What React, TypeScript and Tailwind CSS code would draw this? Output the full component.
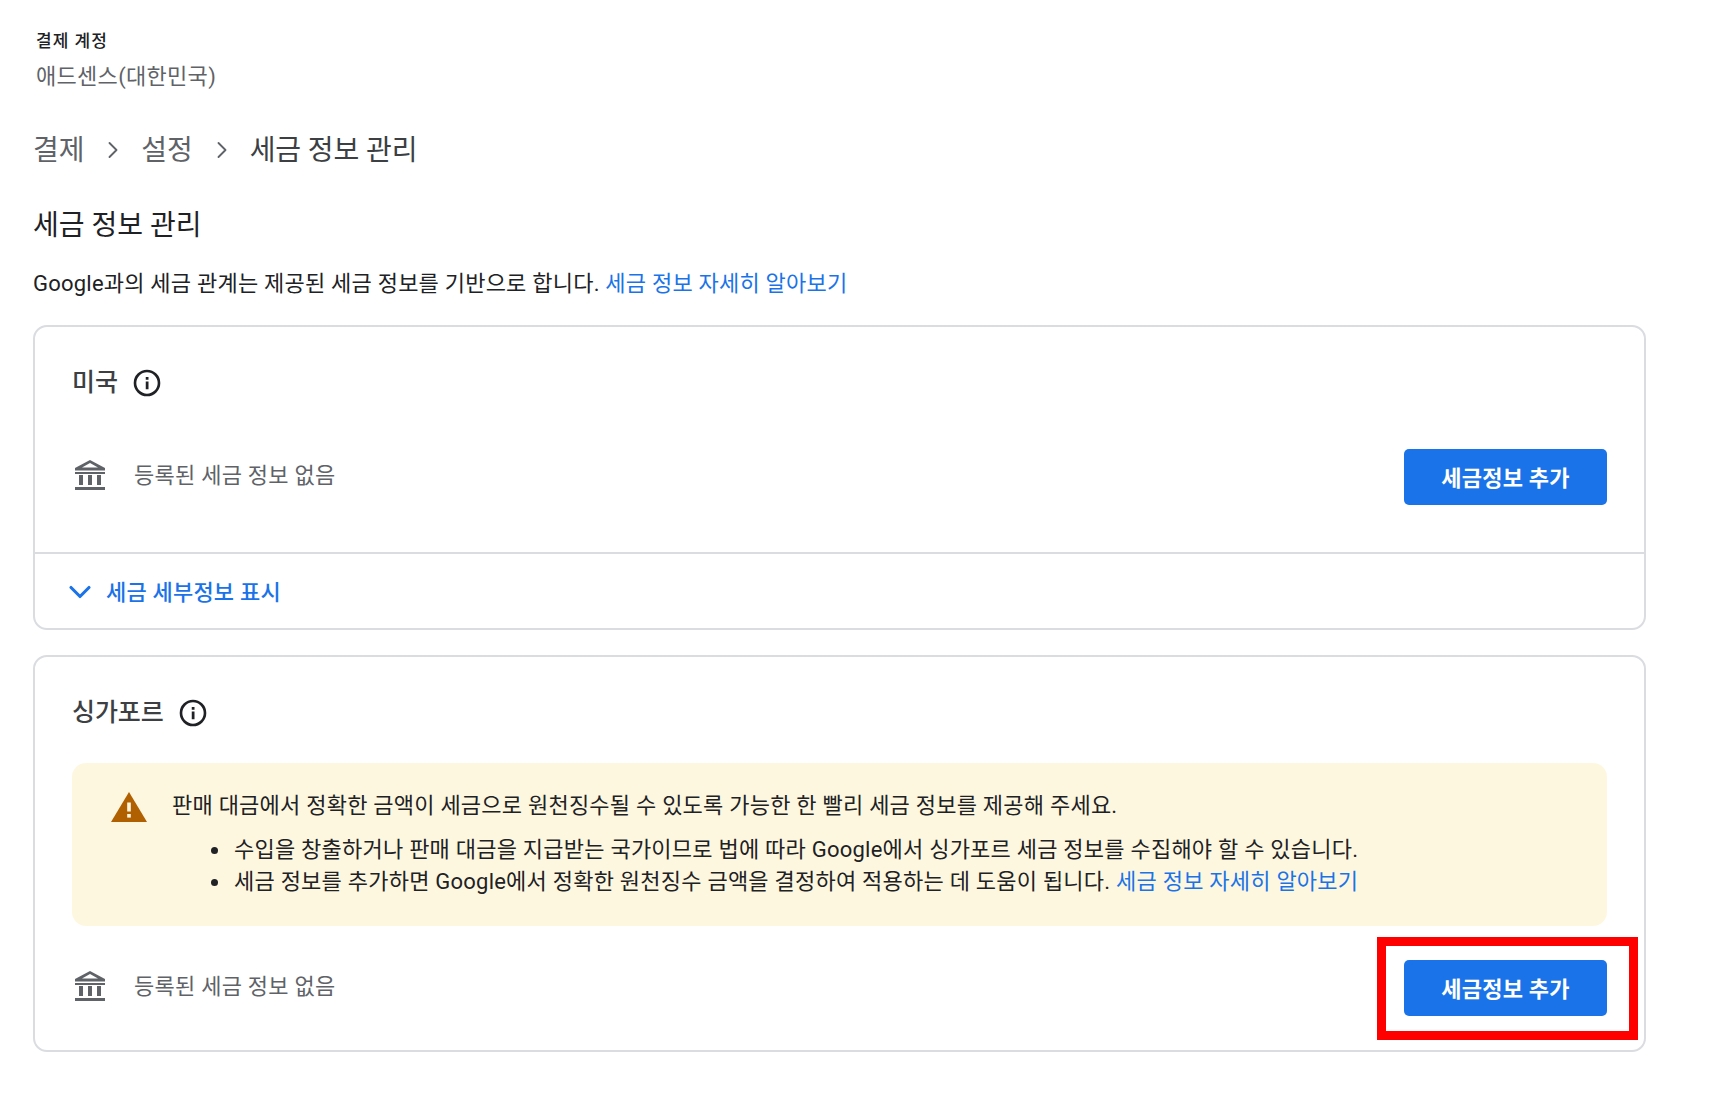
import React from 'react';
import { ChevronDown, ChevronRight } from 'lucide-react';

const font = "font-['Roboto','Noto_Sans_CJK_KR',sans-serif]";

const InfoIcon = () => (
  <svg viewBox="0 0 24 24" className="w-[30px] h-[30px] text-[#202124]" fill="none">
    <circle cx="12" cy="12" r="9.6" stroke="currentColor" strokeWidth="2.1" />
    <rect x="11" y="10.8" width="2.2" height="6.2" fill="currentColor" />
    <rect x="11" y="7.2" width="2.2" height="2.2" fill="currentColor" />
  </svg>
);

const BankIcon = () => (
  <svg viewBox="0 0 32 32" className="w-8 h-8 ml-[2px] text-[#5f6368]" fill="currentColor">
    <path d="M16 1 L31 9 V11.5 H1 V9 Z M16 4 L8 8.5 H24 Z" fillRule="evenodd" />
    <rect x="1" y="13" width="30" height="2" />
    <rect x="5" y="16" width="4" height="10" />
    <rect x="14" y="16" width="4" height="10" />
    <rect x="23" y="16" width="4" height="10" />
    <rect x="1" y="28" width="30" height="3" />
  </svg>
);

const WarnIcon = () => (
  <svg viewBox="0 0 36 30" className="w-9 h-[30px] shrink-0">
    <path d="M18 0 L36 30 H0 Z" fill="#b06000" />
    <rect x="16.2" y="10.5" width="3.6" height="9" fill="#fef7e0" />
    <rect x="16.2" y="22" width="3.6" height="3.6" fill="#fef7e0" />
  </svg>
);

const TaxRow = () => (
  <div className="flex items-center">
    <div className="flex items-center gap-[28px] pb-[4px]">
      <BankIcon />
      <span className="pt-[2px] text-[22px] leading-7 tracking-[0.25px] text-[#5f6368]">등록된 세금 정보 없음</span>
    </div>
    <button className="ml-auto w-[203px] h-[56px] pt-[2px] rounded-[5px] bg-[#1a73e8] text-white text-[22px] font-bold tracking-[0.2px]">
      세금정보 추가
    </button>
  </div>
);

const Link = ({ children }: { children: React.ReactNode }) => (
  <a className="text-[#1a73e8]">{children}</a>
);

export default function App() {
  return (
    <div className={`relative w-[1712px] h-[1107px] bg-white overflow-hidden pl-[33px] pr-[66px] text-[#202124] ${font}`}>
      <div className="pt-[29px] pl-[3px]">
        <div className="text-[17px] leading-6 font-medium tracking-[1px]">결제 계정</div>
        <div className="mt-[10px] text-[22px] leading-7 tracking-[0.3px] text-[#5f6368]">애드센스(대한민국)</div>
      </div>

      <nav className="mt-[40px] flex items-center h-[40px] text-[28px] tracking-[-0.1px] text-[#5f6368]">
        <span>결제</span>
        <ChevronRight className="w-7 h-7 ml-[15px] mr-[14px] -mt-[3px]" strokeWidth={1.6} />
        <span>설정</span>
        <ChevronRight className="w-7 h-7 ml-[15px] mr-[14px] -mt-[3px]" strokeWidth={1.6} />
        <span className="text-[#3c4043]">세금 정보 관리</span>
      </nav>

      <h1 className="mt-[37px] text-[28px] leading-9 font-normal">세금 정보 관리</h1>

      <p className="mt-[26px] text-[22px] leading-7 tracking-[0.22px]">
        Google과의 세금 관계는 제공된 세금 정보를 기반으로 합니다. <Link>세금 정보 자세히 알아보기</Link>
      </p>

      <section className="mt-[27px] h-[305px] border-2 border-[#dadce0] rounded-[14px] flex flex-col">
        <div className="flex-1 px-[37px] pt-[39px]">
          <div className="flex items-center gap-[14px] h-[34px]">
            <span className="text-[25px] font-medium tracking-[-0.1px] text-[#3c4043]">미국</span>
            <InfoIcon />
          </div>
          <div className="mt-[49px]">
            <TaxRow />
          </div>
        </div>
        <div className="h-[76px] pt-[2px] border-t-2 border-[#dadce0] flex items-center pl-[27px] gap-[8px] text-[#1a73e8]">
          <ChevronDown className="w-[36px] h-[36px]" strokeWidth={2.1} />
          <span className="text-[22px] font-medium tracking-[0.2px]">세금 세부정보 표시</span>
        </div>
      </section>

      <section className="mt-[25px] h-[397px] border-2 border-[#dadce0] rounded-[14px] px-[37px] pt-[39px]">
        <div className="flex items-center gap-[14px] h-[34px]">
          <span className="text-[25px] font-medium tracking-[-0.1px] text-[#3c4043]">싱가포르</span>
          <InfoIcon />
        </div>
        <div className="mt-[33px] h-[163px] rounded-[14px] bg-[#fef7e0] pl-[39px] pt-[29px] text-[22px] leading-8 tracking-[0.23px]">
          <div className="flex items-start gap-[25px]">
            <WarnIcon />
            <div>
              <p className="-mt-[2px]">판매 대금에서 정확한 금액이 세금으로 원천징수될 수 있도록 가능한 한 빨리 세금 정보를 제공해 주세요.</p>
              <ul className="list-disc pl-[59px] mt-[12px]">
                <li className="pl-[3px]">수입을 창출하거나 판매 대금을 지급받는 국가이므로 법에 따라 Google에서 싱가포르 세금 정보를 수집해야 할 수 있습니다.</li>
                <li className="pl-[3px]">세금 정보를 추가하면 Google에서 정확한 원천징수 금액을 결정하여 적용하는 데 도움이 됩니다. <Link>세금 정보 자세히 알아보기</Link></li>
              </ul>
            </div>
          </div>
        </div>
        <div className="mt-[34px]">
          <TaxRow />
        </div>
      </section>

      {/* red highlight drawn over the screenshot */}
      <div className="absolute left-[1377px] top-[937px] w-[261px] h-[103px] border-[9px] border-[#ff0000]" />
    </div>
  );
}
